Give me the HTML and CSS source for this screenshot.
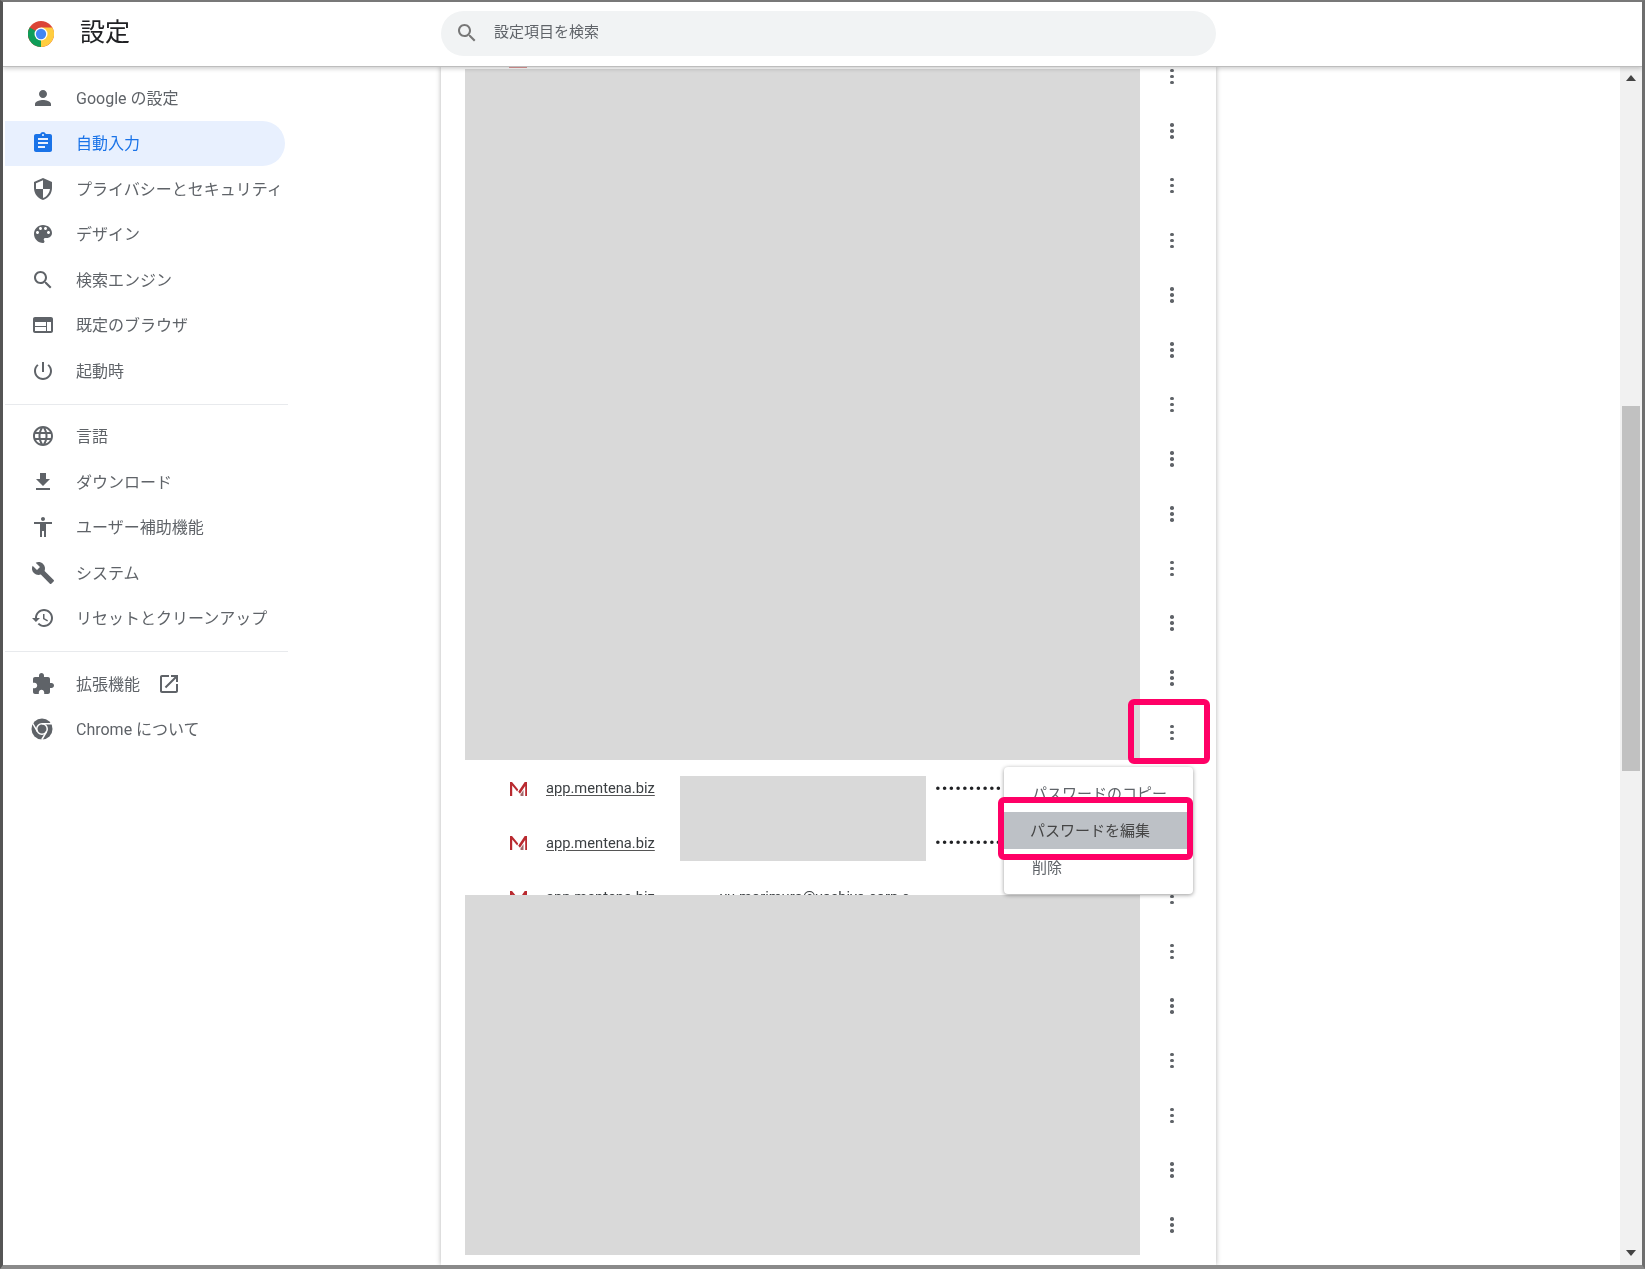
FILE: index.html
```html
<!DOCTYPE html>
<html lang="ja">
<head>
<meta charset="utf-8">
<title>設定</title>
<link rel="stylesheet" href="styles.css">
</head>
<body>
<div class="frame">
  <header class="topbar">
    <div class="brand">
      <svg class="logo" viewBox="0 0 48 48"><circle cx="24" cy="24" r="24" fill="#db4437"/><path d="M24 24 L3.2 36 A24 24 0 0 1 3.2 12 Z" fill="#db4437"/><path d="M3.2 12 A24 24 0 0 0 24 48 L36 27 L24 24 Z" fill="#0f9d58"/><path d="M24 48 A24 24 0 0 0 44.8 12 L24 12 L24 24 Z" fill="#ffcd40"/><circle cx="24" cy="24" r="12" fill="#fff"/><circle cx="24" cy="24" r="9.5" fill="#4285f4"/></svg>
      <h1 class="title">設定</h1>
    </div>
    <div class="search">
      <svg class="search-icon" viewBox="0 0 24 24"><path d="M15.5 14h-.79l-.28-.27C15.41 12.59 16 11.11 16 9.5 16 5.91 13.09 3 9.5 3S3 5.91 3 9.5 5.91 16 9.5 16c1.61 0 3.09-.59 4.23-1.57l.27.28v.79l5 4.99L20.49 19l-4.99-5zm-6 0C7.01 14 5 11.99 5 9.5S7.01 5 9.5 5 14 7.01 14 9.5 11.99 14 9.5 14z"/></svg>
      <span class="search-text">設定項目を検索</span>
    </div>
  </header>
  <div class="body">
    <nav class="sidebar">
      <a class="item"><svg class="ico" viewBox="0 0 24 24"><path d="M12 12c2.21 0 4-1.79 4-4s-1.79-4-4-4-4 1.79-4 4 1.79 4 4 4zm0 2c-2.67 0-8 1.34-8 4v2h16v-2c0-2.66-5.33-4-8-4z"/></svg><span class="label">Google の設定</span></a>
      <a class="item active"><svg class="ico" viewBox="0 0 24 24"><path d="M19 3h-4.18C14.4 1.84 13.3 1 12 1c-1.3 0-2.4.84-2.82 2H5c-1.1 0-2 .9-2 2v14c0 1.1.9 2 2 2h14c1.1 0 2-.9 2-2V5c0-1.1-.9-2-2-2zm-7 0c.55 0 1 .45 1 1s-.45 1-1 1-1-.45-1-1 .45-1 1-1zm2 14H7v-2h7v2zm3-4H7v-2h10v2zm0-4H7V7h10v2z"/></svg><span class="label">自動入力</span></a>
      <a class="item"><svg class="ico" viewBox="0 0 24 24"><path d="M12 1L3 5v6c0 5.55 3.84 10.74 9 12 5.16-1.26 9-6.45 9-12V5l-9-4zm0 10.99h7c-.53 4.12-3.28 7.79-7 8.94V12H5V6.3l7-3.11v8.8z"/></svg><span class="label">プライバシーとセキュリティ</span></a>
      <a class="item"><svg class="ico" viewBox="0 0 24 24"><path d="M12 3c-4.97 0-9 4.03-9 9s4.03 9 9 9c.83 0 1.5-.67 1.5-1.5 0-.39-.15-.74-.39-1.01-.23-.26-.38-.61-.38-.99 0-.83.67-1.5 1.5-1.5H16c2.76 0 5-2.24 5-5 0-4.42-4.03-8-9-8zm-5.5 9c-.83 0-1.5-.67-1.5-1.5S5.67 9 6.5 9 8 9.67 8 10.5 7.33 12 6.5 12zm3-4C8.67 8 8 7.33 8 6.5S8.67 5 9.5 5s1.5.67 1.5 1.5S10.33 8 9.5 8zm5 0c-.83 0-1.5-.67-1.5-1.5S13.67 5 14.5 5s1.5.67 1.5 1.5S15.33 8 14.5 8zm3 4c-.83 0-1.5-.67-1.5-1.5S16.67 9 17.5 9s1.5.67 1.5 1.5-.67 1.5-1.5 1.5z"/></svg><span class="label">デザイン</span></a>
      <a class="item"><svg class="ico" viewBox="0 0 24 24"><path d="M15.5 14h-.79l-.28-.27C15.41 12.59 16 11.11 16 9.5 16 5.91 13.09 3 9.5 3S3 5.91 3 9.5 5.91 16 9.5 16c1.61 0 3.09-.59 4.23-1.57l.27.28v.79l5 4.99L20.49 19l-4.99-5zm-6 0C7.01 14 5 11.99 5 9.5S7.01 5 9.5 5 14 7.01 14 9.5 11.99 14 9.5 14z"/></svg><span class="label">検索エンジン</span></a>
      <a class="item"><svg class="ico" viewBox="0 0 24 24"><path d="M20 4H4c-1.1 0-1.99.9-1.99 2L2 18c0 1.1.9 2 2 2h16c1.1 0 2-.9 2-2V6c0-1.1-.9-2-2-2zm-5 14H4v-4h11v4zm0-5H4V9h11v4zm5 5h-4V9h4v9z"/></svg><span class="label">既定のブラウザ</span></a>
      <a class="item"><svg class="ico" viewBox="0 0 24 24"><path d="M13 3h-2v10h2V3zm4.83 2.17l-1.42 1.42C17.99 7.86 19 9.81 19 12c0 3.87-3.13 7-7 7s-7-3.13-7-7c0-2.19 1.01-4.14 2.58-5.42L6.17 5.17C4.23 6.82 3 9.26 3 12c0 4.97 4.03 9 9 9s9-4.03 9-9c0-2.74-1.23-5.18-3.17-6.83z"/></svg><span class="label">起動時</span></a>
      <hr class="rule">
      <a class="item"><svg class="ico" viewBox="0 0 24 24"><path d="M11.99 2C6.47 2 2 6.48 2 12s4.47 10 9.99 10C17.52 22 22 17.52 22 12S17.52 2 11.99 2zm6.93 6h-2.95c-.32-1.25-.78-2.45-1.38-3.56 1.84.63 3.37 1.91 4.33 3.56zM12 4.04c.83 1.2 1.48 2.53 1.91 3.96h-3.82c.43-1.43 1.08-2.76 1.91-3.96zM4.26 14C4.1 13.36 4 12.69 4 12s.1-1.36.26-2h3.38c-.08.66-.14 1.32-.14 2 0 .68.06 1.34.14 2H4.26zm.82 2h2.95c.32 1.25.78 2.45 1.38 3.56-1.84-.63-3.37-1.9-4.33-3.56zm2.95-8H5.08c.96-1.66 2.49-2.93 4.33-3.56C8.81 5.55 8.35 6.75 8.03 8zM12 19.96c-.83-1.2-1.48-2.53-1.91-3.96h3.82c-.43 1.43-1.08 2.76-1.91 3.96zM14.34 14H9.66c-.09-.66-.16-1.32-.16-2 0-.68.07-1.35.16-2h4.68c.09.65.16 1.32.16 2 0 .68-.07 1.34-.16 2zm.25 5.56c.6-1.11 1.06-2.31 1.38-3.56h2.95c-.96 1.65-2.49 2.93-4.33 3.56zM16.36 14c.08-.66.14-1.32.14-2 0-.68-.06-1.34-.14-2h3.38c.16.64.26 1.31.26 2s-.1 1.36-.26 2h-3.38z"/></svg><span class="label">言語</span></a>
      <a class="item"><svg class="ico" viewBox="0 0 24 24"><path d="M19 9h-4V3H9v6H5l7 7 7-7zM5 18v2h14v-2H5z"/></svg><span class="label">ダウンロード</span></a>
      <a class="item"><svg class="ico" viewBox="0 0 24 24"><path d="M12 2c1.1 0 2 .9 2 2s-.9 2-2 2-2-.9-2-2 .9-2 2-2zm9 7h-6v13h-2v-6h-2v6H9V9H3V7h18v2z"/></svg><span class="label">ユーザー補助機能</span></a>
      <a class="item"><svg class="ico" viewBox="0 0 24 24"><path d="M22.7 19l-9.1-9.1c.9-2.3.4-5-1.5-6.9-2-2-5-2.4-7.4-1.3L9 6 6 9 1.6 4.7C.4 7.1.9 10.1 2.9 12.1c1.9 1.9 4.6 2.4 6.9 1.5l9.1 9.1c.4.4 1 .4 1.4 0l2.3-2.3c.5-.4.5-1.1.1-1.4z"/></svg><span class="label">システム</span></a>
      <a class="item"><svg class="ico" viewBox="0 0 24 24"><path d="M13 3c-4.97 0-9 4.03-9 9H1l3.89 3.89.07.14L9 12H6c0-3.87 3.13-7 7-7s7 3.13 7 7-3.13 7-7 7c-1.93 0-3.68-.79-4.94-2.06l-1.42 1.42C8.27 19.99 10.51 21 13 21c4.97 0 9-4.03 9-9s-4.03-9-9-9zm-1 5v5l4.28 2.54.72-1.21-3.5-2.08V8H12z"/></svg><span class="label">リセットとクリーンアップ</span></a>
      <hr class="rule">
      <a class="item"><svg class="ico" viewBox="0 0 24 24"><path d="M20.5 11H19V7c0-1.1-.9-2-2-2h-4V3.5C13 2.12 11.88 1 10.5 1S8 2.12 8 3.5V5H4c-1.1 0-1.99.9-1.99 2v3.8H3.5c1.49 0 2.7 1.21 2.7 2.7s-1.21 2.7-2.7 2.7H2V20c0 1.1.9 2 2 2h3.8v-1.5c0-1.49 1.21-2.7 2.7-2.7 1.49 0 2.7 1.21 2.7 2.7V22H17c1.1 0 2-.9 2-2v-4h1.5c1.38 0 2.5-1.12 2.5-2.5S21.88 11 20.5 11z"/></svg><span class="label">拡張機能</span><svg class="ext" viewBox="0 0 24 24"><path d="M19 19H5V5h7V3H5c-1.11 0-2 .9-2 2v14c0 1.1.89 2 2 2h14c1.1 0 2-.9 2-2v-7h-2v7zM14 3v2h3.59l-9.83 9.83 1.41 1.41L19 6.41V10h2V3h-7z"/></svg></a>
      <a class="item"><svg class="ico" viewBox="2 0 48 48"><circle cx="24" cy="24" r="21"/><circle cx="24" cy="24" r="10.500" fill="#5f6368" stroke="#fff" stroke-width="3"/><path d="M24 13.500H43M14.900 29.300 5.500 13M33.100 29.300 23.500 45.500" fill="none" stroke="#fff" stroke-width="3"/></svg><span class="label">Chrome について</span></a>
    </nav>
    <main class="content">
      <section class="card">
        <div class="list">
          <div class="peek"><i class="peek-mark"></i></div>
          <div class="redact redact-top"></div>
          <div class="rows">
            <div class="row">
              <svg class="fav" viewBox="0 0 17 15"><path d="M0 15V1h2L8.200 8.500 7.200 10.500 2.200 4.500V15z" fill="#b92a30"/><path d="M8.200 10.700 14.700 1H17v14h-1.800V5L10 12.800z" fill="#b92a30"/><path d="M10.500 15V13.500L13.500 9V15z" fill="#a0676a"/></svg>
              <a class="site">app.mentena.biz</a><span class="user"></span><span class="pw">••••••••••</span>
            </div>
            <div class="row">
              <svg class="fav" viewBox="0 0 17 15"><path d="M0 15V1h2L8.200 8.500 7.200 10.500 2.200 4.500V15z" fill="#b92a30"/><path d="M8.200 10.700 14.700 1H17v14h-1.800V5L10 12.800z" fill="#b92a30"/><path d="M10.500 15V13.500L13.500 9V15z" fill="#a0676a"/></svg>
              <a class="site">app.mentena.biz</a><span class="user"></span><span class="pw">••••••••••</span>
            </div>
            <div class="row">
              <svg class="fav" viewBox="0 0 17 15"><path d="M0 15V1h2L8.200 8.500 7.200 10.500 2.200 4.500V15z" fill="#b92a30"/><path d="M8.200 10.700 14.700 1H17v14h-1.800V5L10 12.800z" fill="#b92a30"/><path d="M10.500 15V13.500L13.500 9V15z" fill="#a0676a"/></svg>
              <a class="site">app.mentena.biz</a><span class="user">yu.morimura@yoshiya-corp.c</span><span class="pw">•••••••••••</span><span class="tail">•••</span>
            </div>
            <div class="redact redact-mid"></div>
          </div>
          <div class="redact redact-bottom"></div>
        </div>
        <div class="kebabs">
          <button class="kebab"><i></i><i></i><i></i></button><button class="kebab"><i></i><i></i><i></i></button><button class="kebab"><i></i><i></i><i></i></button><button class="kebab"><i></i><i></i><i></i></button><button class="kebab"><i></i><i></i><i></i></button><button class="kebab"><i></i><i></i><i></i></button><button class="kebab"><i></i><i></i><i></i></button><button class="kebab"><i></i><i></i><i></i></button><button class="kebab"><i></i><i></i><i></i></button><button class="kebab"><i></i><i></i><i></i></button><button class="kebab"><i></i><i></i><i></i></button><button class="kebab"><i></i><i></i><i></i></button><button class="kebab"><i></i><i></i><i></i></button><button class="kebab"><i></i><i></i><i></i></button><button class="kebab"><i></i><i></i><i></i></button><button class="kebab"><i></i><i></i><i></i></button><button class="kebab"><i></i><i></i><i></i></button><button class="kebab"><i></i><i></i><i></i></button><button class="kebab"><i></i><i></i><i></i></button><button class="kebab"><i></i><i></i><i></i></button><button class="kebab"><i></i><i></i><i></i></button><button class="kebab"><i></i><i></i><i></i></button>
        </div>
        <div class="menu">
          <div class="menu-item">パスワードのコピー</div>
          <div class="menu-item hover">パスワードを編集</div>
          <div class="menu-item">削除</div>
        </div>
        <div class="callout callout-kebab"></div>
        <div class="callout callout-menu"></div>
      </section>
    </main>
    <aside class="scrollbar">
      <div class="arrow up"></div>
      <div class="track"><div class="thumb"></div></div>
      <div class="arrow down"></div>
    </aside>
  </div>
</div>
</body>
</html>
```
FILE: styles.css
```css
* { box-sizing: border-box; }
html, body { margin: 0; padding: 0; background: #fff; }
body {
  font-family: Roboto, "Noto Sans CJK JP", sans-serif;
  color: #5f6368;
  overflow: hidden;
}
.frame {
  width: 1645px;
  height: 1269px;
  display: flex;
  flex-direction: column;
  border-style: solid;
  border-color: #787878 #6e6e6e #8a8a8a #555;
  border-width: 2px 3px 4px 3px;
  overflow: hidden;
  background: #fff;
  filter: blur(.4px);
}
.topbar {
  flex: none;
  height: 64px;
  padding-bottom: 1px;
  display: flex;
  align-items: center;
  position: relative;
  z-index: 5;
  background: #fff;
  box-shadow: 0 1px 0 #bdbdbd, 0 3px 4px rgba(0, 0, 0, .18);
}
.brand {
  width: 438px;
  display: flex;
  align-items: center;
  padding-left: 25px;
}
.logo { width: 26px; height: 26px; flex: none; }
.title {
  margin: 0 0 0 26px;
  padding-bottom: 2px;
  font-size: 25px;
  font-weight: 400;
  color: #202124;
  line-height: 1;
}
.search {
  width: 775px;
  height: 45px;
  border-radius: 23px;
  background: #f1f3f4;
  display: flex;
  align-items: center;
  padding-left: 14px;
  font-size: 15px;
  color: #5f6368;
}
.search-icon { width: 24px; height: 24px; fill: #777; flex: none; margin: 0 15px 2px 0; }
.search-text { padding-bottom: 6px; }
.body { flex: 1; min-height: 0; display: flex; }
.sidebar {
  width: 438px;
  flex: none;
  padding: 9px 0 0 2px;
  display: flex;
  flex-direction: column;
  position: relative;
}
.item {
  width: 280px;
  height: 45.500px;
  display: flex;
  align-items: center;
  padding-left: 26px;
  font-size: 16px;
  color: #5f6368;
  border-radius: 0 23px 23px 0;
  white-space: nowrap;
  flex: none;
}
.label { padding-bottom: 2px; }
.item.active { background: #e8f0fe; color: #1a73e8; }
.ico { width: 24px; height: 24px; flex: none; margin-right: 21px; fill: #5f6368; }
.active .ico { fill: #1a73e8; }
.ext { width: 24px; height: 24px; fill: #5f6368; margin-left: 17px; flex: none; }
.rule { width: 283px; height: 1px; border: 0; background: #e8eaed; margin: 10px 0 9px 0; flex: none; }
.content { flex: 1; min-width: 0; height: 100%; }
.card {
  width: 775px;
  height: 100%;
  display: flex;
  background: #fff;
  padding-left: 24px;
  position: relative;
  box-shadow: 0 0 5px rgba(0, 0, 0, .3);
}
.list { width: 675px; flex: none; height: 100%; }
.peek { height: 3px; padding: 1px 0 0 44px; }
.peek-mark { display: block; width: 18px; height: 1px; background: #e39a9a; }
.redact { background: #d9d9d9; }
.redact-top { height: 691px; }
.redact-bottom { height: 360px; }
.rows {
  position: relative;
  height: 135px;
  padding-top: 1px;
  overflow: hidden;
  font-size: 14.700px;
  color: #333;
}
.redact-mid { position: absolute; left: 215px; top: 16px; width: 246px; height: 85px; }
.row { height: 54.600px; display: flex; align-items: center; position: relative; white-space: nowrap; }
.fav { width: 17px; height: 15px; flex: none; margin-left: 45px; margin-right: 19px; }
.site {
  width: 174px;
  flex: none;
  color: #3c4043;
  text-decoration: underline;
  text-decoration-color: #555;
  text-underline-offset: 2px;
}
.user { width: 215px; flex: none; color: #3c4043; }
.pw { color: #202124; letter-spacing: 1px; font-size: 17px; line-height: 1; }
.tail { position: absolute; left: 636px; top: 15px; color: #999; font-size: 13px; letter-spacing: 1px; line-height: 1; }
.kebabs { width: 64px; flex: none; margin-top: -17px; display: flex; flex-direction: column; }
.kebab {
  height: 54.700px;
  flex: none;
  border: 0;
  padding: 0;
  background: none;
  display: flex;
  flex-direction: column;
  align-items: center;
  justify-content: center;
  gap: 2.500px;
}
.kebab i { display: block; width: 3.500px; height: 3.500px; border-radius: 50%; background: #5f6368; }
.menu {
  position: absolute;
  left: 563px;
  top: 701px;
  width: 189px;
  height: 127px;
  border-radius: 4px;
  background: #fff;
  box-shadow: 0 1px 4px rgba(0, 0, 0, .4);
  padding-top: 8px;
  font-size: 15px;
  color: #5f6368;
}
.menu-item { height: 37px; padding: 0 0 3px 28px; display: flex; align-items: center; }
.menu-item.hover { background: #bdc1c6; width: 183px; height: 37px; color: #444; padding: 0 0 3px 26px; }
.callout { position: absolute; border: 6px solid #ff0066; border-radius: 6px; }
.callout-kebab { left: 687px; top: 633px; width: 82px; height: 65px; }
.callout-menu { left: 557px; top: 731px; width: 195px; height: 63px; }
.scrollbar {
  width: 22px;
  flex: none;
  margin-left: auto;
  background: #f1f1f1;
  display: flex;
  flex-direction: column;
  align-items: center;
}
.track { flex: 1; width: 100%; padding-top: 325px; }
.thumb { width: 18px; height: 365px; margin: 0 auto; background: #c1c1c1; }
.arrow { flex: none; width: 0; height: 0; border-left: 5px solid transparent; border-right: 5px solid transparent; }
.arrow.up { border-bottom: 6px solid #444; margin-top: 9px; }
.arrow.down { border-top: 6px solid #444; margin-bottom: 9px; }
```
